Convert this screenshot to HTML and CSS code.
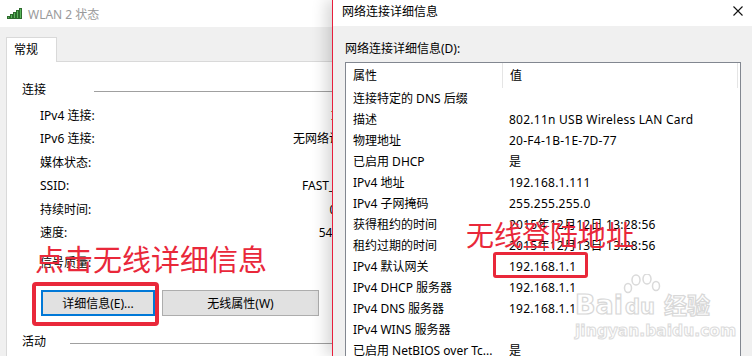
FILE: index.html
```html
<!DOCTYPE html>
<html lang="zh-cn">

<head>
  <meta charset="UTF-8">
  <meta name="viewport" content="width=device-width, initial-scale=1.0">
  <title>WLAN 2 状态 - 网络连接详细信息</title>
  <link rel="stylesheet" href="styles.css">
</head>

<body>
  <div class="screen">
    <!-- 左侧：WLAN 状态窗口 -->
    <section class="win win-status">
      <header class="titlebar">
        <svg class="wifi-icon" width="16" height="11" viewBox="0 0 16 11">
          <rect x="0.5" y="8.5" width="2" height="2" />
          <rect x="3.5" y="6.5" width="2" height="4" />
          <rect x="6.5" y="4.5" width="2" height="6" />
          <rect x="9.5" y="2.5" width="2" height="8" />
          <rect x="12.5" y="0.5" width="2" height="10" />
        </svg>
        <span class="title">WLAN 2 状态</span>
      </header>
      <div class="status-body">
        <div class="tab">常规</div>
        <div class="tab-panel">
          <div class="group-head">
            <span class="group-label">连接</span>
            <i class="rule"></i>
          </div>
          <div class="props">
            <div class="prop"><span>IPv4 连接:</span><span>Internet</span></div>
            <div class="prop"><span>IPv6 连接:</span><span>无网络访问权限</span></div>
            <div class="prop"><span>媒体状态:</span><span>已启用</span></div>
            <div class="prop"><span>SSID:</span><span>FAST_6A2C38</span></div>
            <div class="prop"><span>持续时间:</span><span>00:36:18</span></div>
            <div class="prop"><span>速度:</span><span>54.0 Mbps</span></div>
          </div>
          <div class="signal">信号质量:</div>
          <div class="btn-row">
            <button class="btn btn-focus">详细信息(E)...</button>
            <button class="btn btn-wide">无线属性(W)</button>
          </div>
          <div class="group-head activity">
            <span class="group-label">活动</span>
            <i class="rule"></i>
          </div>
        </div>
      </div>
    </section>

    <!-- 右侧：网络连接详细信息 -->
    <section class="win win-details">
      <header class="titlebar">
        <span class="title">网络连接详细信息</span>
        <svg class="close" width="10" height="10" viewBox="0 0 10 10">
          <path d="M0.5 0.5 L9.5 9.5 M9.5 0.5 L0.5 9.5" />
        </svg>
      </header>
      <div class="details-body">
        <div class="list-label">网络连接详细信息(D):</div>
        <div class="listbox">
          <div class="list-head">
            <span>属性</span>
            <span>值</span>
          </div>
          <div class="list-row"><span>连接特定的 DNS 后缀</span><span></span></div>
          <div class="list-row"><span>描述</span><span>802.11n USB Wireless LAN Card</span></div>
          <div class="list-row"><span>物理地址</span><span>20-F4-1B-1E-7D-77</span></div>
          <div class="list-row"><span>已启用 DHCP</span><span>是</span></div>
          <div class="list-row"><span>IPv4 地址</span><span>192.168.1.111</span></div>
          <div class="list-row"><span>IPv4 子网掩码</span><span>255.255.255.0</span></div>
          <div class="list-row"><span>获得租约的时间</span><span>2015年12月12日 13:28:56</span></div>
          <div class="list-row"><span>租约过期的时间</span><span>2015年12月13日 13:28:56</span></div>
          <div class="list-row"><span>IPv4 默认网关</span><span>192.168.1.1</span></div>
          <div class="list-row"><span>IPv4 DHCP 服务器</span><span>192.168.1.1</span></div>
          <div class="list-row"><span>IPv4 DNS 服务器</span><span>192.168.1.1</span></div>
          <div class="list-row"><span>IPv4 WINS 服务器</span><span></span></div>
          <div class="list-row"><span>已启用 NetBIOS over Tc...</span><span>是</span></div>
        </div>
      </div>
    </section>

    <!-- 标注 -->
    <div class="note note-click">点击无线详细信息</div>
    <div class="note note-gateway">无线登陆地址</div>
    <div class="mark mark-btn"></div>
    <div class="mark mark-ip"></div>

    <!-- 水印 -->
    <div class="watermark">
      <svg class="paw" width="40" height="22" viewBox="0 0 40 22">
        <ellipse cx="5" cy="14" rx="3.5" ry="4.5" />
        <ellipse cx="13" cy="6" rx="4" ry="5" />
        <ellipse cx="24" cy="5" rx="4" ry="5" />
        <ellipse cx="33" cy="12" rx="3.5" ry="4.5" />
      </svg>
      <div class="wm-logo"><span>Bai</span><span class="wm-du">du</span><span class="wm-cn">经验</span></div>
      <div class="wm-url">jingyan.baidu.com</div>
    </div>
  </div>
</body>

</html>
```

FILE: styles.css
```css
* {
  box-sizing: border-box;
}

html,
body {
  margin: 0;
}

body {
  font-family: "Noto Sans", "Noto Sans CJK SC", sans-serif;
  font-size: 12px;
  color: #000;
  background: #f0f0f0;
}

.screen {
  position: relative;
  display: flex;
  width: 752px;
  height: 356px;
  overflow: hidden;
}

.win {
  display: flex;
  flex-direction: column;
  background: #f0f0f0;
}

.titlebar {
  display: flex;
  align-items: center;
  flex: none;
  height: 27px;
  background: #fff;
}

/* 左窗口 */
.win-status {
  flex: none;
  width: 332px;
  overflow: hidden;
}

.win-status .titlebar {
  gap: 5px;
  padding-left: 7px;
  color: #9a9a9a;
}

.wifi-icon rect {
  fill: #5cb85c;
  stroke: #2e6b2e;
  stroke-width: 1;
}

.status-body {
  flex: 1;
  padding: 10px 0 0 6px;
}

.tab {
  position: relative;
  z-index: 1;
  width: 51px;
  height: 25px;
  margin-bottom: -1px;
  padding-left: 7px;
  line-height: 24px;
  background: #fff;
  border: 1px solid #d9d9d9;
  border-bottom: none;
}

.tab-panel {
  width: 420px;
  height: 320px;
  padding-left: 15px;
  background: #fff;
  border: 1px solid #d9d9d9;
}

.group-head {
  display: flex;
  align-items: center;
  margin-top: 20px;
  line-height: 16px;
}

.group-label {
  flex: none;
  width: 72px;
}

.rule {
  flex: 1;
  height: 1px;
  margin-top: 2px;
  background: #a0a0a0;
}

.activity {
  margin-top: 18px;
}

.activity .group-label {
  width: 48px;
}

.props {
  width: 355px;
  margin-top: 6px;
}

.prop {
  display: flex;
  justify-content: space-between;
  padding-left: 18px;
  line-height: 23.4px;
  white-space: nowrap;
}

.signal {
  margin-top: 11px;
  padding-left: 18px;
  line-height: 16px;
}

.btn-row {
  display: flex;
  gap: 7px;
  margin: 19px 0 0 19px;
}

.btn {
  width: 114px;
  height: 26px;
  padding: 0;
  font: inherit;
  color: #000;
  background: #e1e1e1;
  border: 1px solid #adadad;
}

.btn-focus {
  border: 2px solid #0078d7;
}

.btn-wide {
  width: 157px;
}

/* 右窗口 */
.win-details {
  position: relative;
  flex: 1;
  border-left: 1px solid #e81e3c;
  box-shadow: -6px 0 14px rgba(0, 0, 0, .16);
}

.win-details .titlebar {
  justify-content: space-between;
  height: 26px;
  padding: 0 9px 4px 9px;
}

.close path {
  stroke: #111;
  stroke-width: 1.1;
  fill: none;
}

.details-body {
  flex: 1;
  padding: 15px 11px 0 12px;
}

.list-label {
  line-height: 16px;
}

.listbox {
  width: 396px;
  height: 320px;
  margin-top: 5px;
  background: #fff;
  border: 1px solid #828790;
}

.list-head,
.list-row {
  display: grid;
  grid-template-columns: 156px 236px;
  white-space: nowrap;
}

.list-head {
  height: 25px;
  line-height: 25px;
}

.list-head span,
.list-row span {
  padding-left: 7px;
}

.list-row span + span {
  letter-spacing: .25px;
}

.list-head span + span {
  border-left: 1px solid #e5e5e5;
  border-right: 1px solid #e5e5e5;
}

.list-row {
  line-height: 21px;
}

/* 标注 */
.note {
  position: absolute;
  font-family: "Noto Sans CJK SC", sans-serif;
  color: #e9283a;
  line-height: 1;
  white-space: nowrap;
}

.note-click {
  left: 35px;
  top: 244px;
  font-size: 29px;
}

.note-gateway {
  left: 466px;
  top: 220px;
  font-size: 28px;
}

.mark {
  position: absolute;
  border-style: solid;
  border-color: #e9283a;
  border-radius: 4px;
}

.mark-btn {
  left: 32px;
  top: 282px;
  width: 127px;
  height: 44px;
  border-width: 4px;
}

.mark-ip {
  left: 493px;
  top: 252px;
  width: 95px;
  height: 26px;
  border-width: 3px;
  border-radius: 3px;
}

/* 水印 */
.watermark {
  position: absolute;
  left: 575px;
  top: 274px;
  width: 140px;
  color: #fff;
  opacity: .9;
}

.paw {
  position: absolute;
  left: 48px;
  top: 0;
}

.paw ellipse {
  fill: #fff;
  stroke: #d6d6d6;
  stroke-width: 1.5;
}

.wm-logo {
  display: flex;
  align-items: baseline;
  margin-top: 16px;
  font-family: "DejaVu Sans", sans-serif;
  font-size: 27px;
  font-weight: bold;
  line-height: 28px;
  -webkit-text-stroke: 1.2px #d4d4d4;
}

.wm-du {
  margin-left: 2px;
  font-size: 21px;
}

.wm-cn {
  margin-left: 9px;
  font-family: "Noto Sans CJK SC", sans-serif;
  font-size: 23px;
}

.wm-url {
  margin-top: 2px;
  font-family: "DejaVu Sans", sans-serif;
  font-size: 15.5px;
  font-weight: bold;
  line-height: 16px;
  -webkit-text-stroke: 1px #d8d8d8;
}
```
